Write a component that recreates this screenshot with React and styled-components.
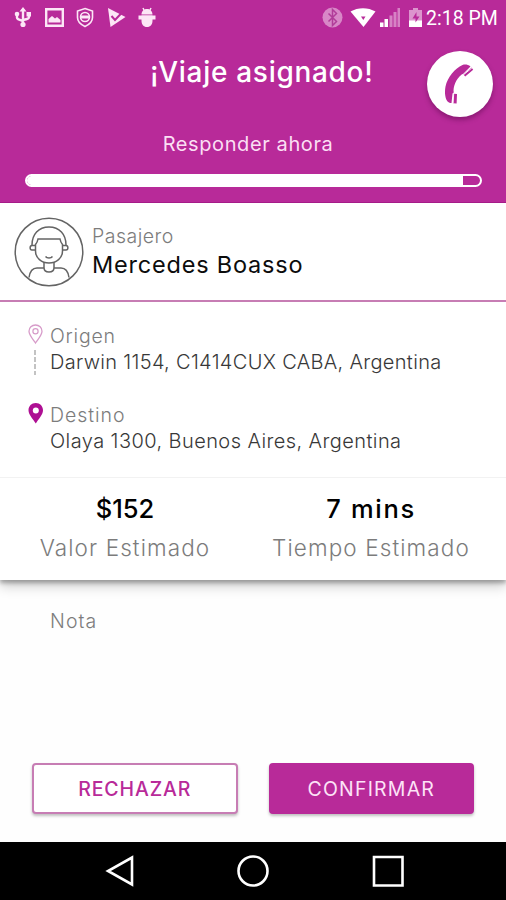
import styled, {createGlobalStyle, ThemeProvider} from "styled-components";

const theme = {
    colors: {
        MAIN: "#b82a99",
        PIN: "#ae0f93",
        LINE: "#c77db4",
        BLACK: "#0c0c0c",
        DARK: "#383838",
        GRAY: "#7c7c7c",
        WHITE: "#fefefe",
    }
}

const StatusIcons = () => (
    <>
        <svg width="148" height="36" viewBox="0 0 148 36" fill="none" stroke="#fce6f6">
            <path d="M15 9v14M9 14v3.500c0 1.500 1 2 6 3.500M21 14v3c0 1.500-1 2-6 3" strokeWidth="2.400"/>
            <path d="M15 7l3.500 4.500h-7zM18.500 12h4.500v4.500h-4.500z" fill="#fce6f6" stroke="none"/>
            <circle cx="9" cy="14" r="2.300" fill="#fce6f6" stroke="none"/>
            <circle cx="15" cy="24.500" r="2.600" fill="#fce6f6" stroke="none"/>
            <path d="M38.200 9.200h16.600v16.600H38.200z" strokeWidth="2.400"/>
            <path d="M40.500 22.500v-3.500l3.500-3 3 2.500 2-1.500 3.500 3v2.500z" fill="#fce6f6" stroke="none"/>
            <path d="M77 8.500l7.500 2.500v6.500c0 4-3 7-7.500 9-4.500-2-7.500-5-7.500-9V11z" strokeWidth="1.600"/>
            <circle cx="77" cy="17" r="4.500" strokeWidth="1.600"/>
            <path d="M72 15.500h10v3H72z" fill="#fce6f6" stroke="none"/>
            <path d="M100 8l17.500 9-15 10z" fill="#fce6f6" stroke="none"/>
            <path d="M103.500 16l3.500 4 8-8.500" stroke="#b82a99" strokeWidth="2"/>
            <path d="M133.500 14.500c0-3 2-5.500 5.500-5.500s5.500 2.500 5.500 5.500zM133.500 15.500h11v5c0 4-2 6.500-5.500 6.500s-5.500-2.500-5.500-6.500z" fill="#fce6f6" stroke="none"/>
            <path d="M135 8l1.500 3M143 8l-1.500 3" strokeWidth="1.500"/>
            <path d="M130.500 15.500v4h17v-4z" fill="#fce6f6" stroke="none"/>
        </svg>
        <svg width="104" height="36" viewBox="0 0 104 36" fill="none">
            <circle cx="12.500" cy="17.500" r="10" fill="#d887c7"/>
            <path d="M8.500 13.500l8 8-4 4V9.500l4 4-8 8" stroke="#b13c99" strokeWidth="1.500"/>
            <path d="M30.500 11.500C38 7 48 7 55.500 11.500L43.500 27z" fill="#fff"/>
            <path d="M41 16.500h4.500l-2.200 3.500z" fill="#b82a99"/>
            <path d="M60 22.500h3.500V27H60zM64.500 19h3.500v8h-3.500z" fill="#fff"/>
            <path d="M69.500 15.500h3V27h-3zM73.500 12h3v15h-3zM77.500 8h2.500v19h-2.500z" fill="#d782c5"/>
            <path d="M89 10h4V8h5v2h4v11H89z" fill="#dc94cd"/>
            <path d="M89 20.500h13V27H89z" fill="#fff"/>
            <path d="M96.500 12l-4 6.500h3v4l4-6h-3z" fill="#b82a99"/>
        </svg>
    </>
)

const PhoneIcon = () => (
    <svg width="30" height="42" viewBox="0 0 30 42">
        <path d="M26.500 3.500C24 1.500 21 1 18.500 2 11 5.500 3.500 14 1.500 23.500c-1.200 6.500-.2 12.500 2.300 15.300 1 .9 2.300 1.200 3.700 1.200l1-9.500 1.200-1C9 24 11.500 16.500 18 11.300l1-.3z" fill="#b82a99"/>
        <path d="M19.500 11.500l8-7 1.700 2.300-8 6.700zM9.600 30.800l3.400.2-.4 9.500-3.600-.2z" fill="#b82a99"/>
        <path d="M19.500 11.800l8.300-6.800M9.700 30.500l-.6 10" stroke="#fff" strokeWidth="0.900"/>
    </svg>
)

const PassengerIcon = () => (
    <svg width="70" height="70" viewBox="0 0 70 70" fill="none" stroke="#646464" strokeWidth="1.500">
        <circle cx="35" cy="35" r="33.800"/>
        <path d="M18 28c0-10.500 6.500-18 17-18s17 7.500 17 18"/>
        <path d="M21.500 34v-6.500c1-1.200 2-2.500 2.500-5.500h22c.5 3 1.500 4.300 2.500 5.500V34c0 7-6 12-13.500 12s-13.500-5-13.500-12z"/>
        <path d="M21 28.500h-3c-2.500 0-2.500 4.500 0 4.500h3.500M49 28.500h3c2.500 0 2.500 4.500 0 4.500h-3.500"/>
        <path d="M31.500 39.500c1.500 2 5.500 2 7 0"/>
        <path d="M30 45.500v5c0 3 2 4.500 5 4.500s5-1.500 5-4.500v-5M30 51h-7c-4.500 0-7 2.500-8 9.500M40 51h7c4.500 0 7 2.500 8 9.500"/>
    </svg>
)

const OriginIcon = () => (
    <svg width="16" height="52" viewBox="0 0 16 52" fill="none">
        <path d="M7.500 1C3.800 1 1 3.800 1 7.200 1 11 4.500 14.500 7.500 19c3-4.500 6.500-8 6.500-11.800C14 3.800 11.200 1 7.500 1z" stroke="#d79bc9" strokeWidth="1.300"/>
        <circle cx="7.500" cy="7.300" r="2.600" stroke="#d79bc9" strokeWidth="1.200"/>
        <path d="M7 26v25" stroke="#aaa" strokeWidth="1.400" strokeDasharray="5 2"/>
    </svg>
)

const DestinationIcon = () => (
    <svg width="16" height="22" viewBox="0 0 16 22">
        <path d="M7.800 0C3.500 0 .5 3.200.5 7.200c0 4.600 4.800 9 7.300 13.300 2.500-4.300 7.200-8.700 7.200-13.300C15 3.200 12 0 7.800 0z" fill={theme.colors.PIN}/>
        <circle cx="7.800" cy="7.500" r="3" fill="#fff"/>
    </svg>
)

const App = () => {
    return (
        <ThemeProvider theme={theme}>
            <GlobalStyle/>
            <Screen>
                <Header>
                    <StatusBar>
                        <StatusIcons/>
                        <Clock>2:18 PM</Clock>
                    </StatusBar>
                    <TitleRow>
                        <Title>¡Viaje asignado!</Title>
                        <CallBtn><PhoneIcon/></CallBtn>
                    </TitleRow>
                    <SubTitle>Responder ahora</SubTitle>
                    <TimeBar>
                        <TimeFill/>
                    </TimeBar>
                </Header>
                <TripCard>
                    <Passenger>
                        <PassengerIcon/>
                        <div>
                            <Label $spacing={0.5}>Pasajero</Label>
                            <PassengerName>Mercedes Boasso</PassengerName>
                        </div>
                    </Passenger>
                    <Places>
                        <Place>
                            <OriginIcon/>
                            <div>
                                <Label $spacing={0.8}>Origen</Label>
                                <Address $spacing={0.32}>Darwin 1154, C1414CUX CABA, Argentina</Address>
                            </div>
                        </Place>
                        <Place>
                            <DestinationIcon/>
                            <div>
                                <Label $spacing={0.95}>Destino</Label>
                                <Address $spacing={0.42}>Olaya 1300, Buenos Aires, Argentina</Address>
                            </div>
                        </Place>
                    </Places>
                    <Estimates>
                        <Estimate>
                            <Value>$152</Value>
                            <Caption>Valor Estimado</Caption>
                        </Estimate>
                        <Estimate>
                            <Value $spacing={1.7}>7 mins</Value>
                            <Caption>Tiempo Estimado</Caption>
                        </Estimate>
                    </Estimates>
                </TripCard>
                <Note>Nota</Note>
                <Actions>
                    <ActionBtn>RECHAZAR</ActionBtn>
                    <ActionBtn $primary>CONFIRMAR</ActionBtn>
                </Actions>
                <NavBar>
                    <svg width="30" height="34" viewBox="0 0 30 34" fill="none" stroke="#fff" strokeWidth="2.600">
                        <path d="M27 3.500v27L3 17z"/>
                    </svg>
                    <svg width="34" height="34" viewBox="0 0 34 34" fill="none" stroke="#fff" strokeWidth="2.600">
                        <circle cx="17" cy="17" r="14.500"/>
                    </svg>
                    <svg width="34" height="34" viewBox="0 0 34 34" fill="none" stroke="#fff" strokeWidth="2.600">
                        <path d="M3 3h28.500v28.500H3z"/>
                    </svg>
                </NavBar>
            </Screen>
        </ThemeProvider>
    );
};

const GlobalStyle = createGlobalStyle`
  * {
    box-sizing: border-box;
  }
  body {
    margin: 0;
    font-family: Inter, "Open Sans", sans-serif;
  }
  svg {
    display: block;
    flex-shrink: 0;
  }
`;
const Screen = styled.div`
  width: 506px;
  height: 900px;
  display: flex;
  flex-direction: column;
  overflow: hidden;
  background: ${({theme}) => theme.colors.WHITE};
`;
const Header = styled.header`
  height: 203px;
  background: ${({theme}) => theme.colors.MAIN};
  border-bottom: 1px solid #a51b88;
  color: #fff;
`;
const StatusBar = styled.div`
  height: 36px;
  display: flex;
  padding: 0 8px;
  svg:nth-of-type(2) {
    margin-left: 164px;
  }
`;
const Clock = styled.span`
  flex: 1;
  margin-left: 2px;
  white-space: nowrap;
  font-family: Roboto, sans-serif;
  font-size: 19.5px;
  line-height: 37px;
`;
const TitleRow = styled.div`
  height: 84px;
  display: flex;
  align-items: flex-start;
  justify-content: space-between;
  padding: 0 13px 0 150px;
`;
const Title = styled.h1`
  margin: 0;
  font-size: 28px;
  font-weight: 500;
  line-height: 73px;
  letter-spacing: 0.7px;
  white-space: nowrap;
`;
const CallBtn = styled.button`
  width: 66px;
  height: 66px;
  margin-top: 15px;
  padding: 0 2px 0 0;
  display: flex;
  align-items: center;
  justify-content: center;
  border: none;
  border-radius: 50%;
  background: #fff;
  box-shadow: 0 3px 5px rgba(70, 0, 60, 0.4);
`;
const SubTitle = styled.p`
  margin: 0 0 6px;
  padding-right: 10px;
  text-align: center;
  color: #fbdff4;
  font-size: 20px;
  line-height: 48px;
  letter-spacing: 0.6px;
`;
const TimeBar = styled.div`
  height: 13px;
  margin: 0 24px 0 25px;
  border: 2px solid #fff;
  border-radius: 7px;
  overflow: hidden;
`;
const TimeFill = styled.div`
  width: 436px;
  height: 100%;
  background: #fff;
`;
const TripCard = styled.section`
  height: 377px;
  background: #fff;
  box-shadow: 0 3px 4px rgba(0, 0, 0, 0.28), 0 6px 12px rgba(0, 0, 0, 0.2);
  clip-path: inset(0 0 -30px 0);
`;
const Passenger = styled.div`
  height: 99px;
  display: flex;
  gap: 8px;
  padding: 14px 14px 0;
  border-bottom: 2px solid ${({theme}) => theme.colors.LINE};
  > div {
    padding-top: 6px;
  }
`;
const Label = styled.div`
  color: ${({theme}) => theme.colors.GRAY};
  font-size: 19.5px;
  font-weight: 300;
  line-height: 27px;
  letter-spacing: ${({$spacing}) => $spacing}px;
`;
const PassengerName = styled.div`
  color: ${({theme}) => theme.colors.BLACK};
  font-size: 23.5px;
  font-weight: 400;
  line-height: 30px;
  letter-spacing: 0.8px;
`;
const Places = styled.div`
  height: 175px;
  padding: 22px 28px 0;
`;
const Place = styled.div`
  height: 79px;
  display: flex;
  gap: 6px;
  > div {
    margin-top: -1px;
    white-space: nowrap;
  }
`;
const Address = styled.div`
  color: ${({theme}) => theme.colors.DARK};
  font-size: 20px;
  font-weight: 300;
  line-height: 24px;
  letter-spacing: ${({$spacing}) => $spacing}px;
`;
const Estimates = styled.div`
  height: 103px;
  display: grid;
  grid-template-columns: 250px 242px;
  padding-top: 12px;
  border-top: 1px solid #f2f2f2;
`;
const Estimate = styled.div`
  text-align: center;
`;
const Value = styled.div`
  color: #000;
  font-size: 25.5px;
  font-weight: 500;
  line-height: 38px;
  letter-spacing: ${({$spacing}) => $spacing || 0}px;
`;
const Caption = styled.div`
  color: ${({theme}) => theme.colors.GRAY};
  font-size: 22.5px;
  font-weight: 300;
  line-height: 40px;
  letter-spacing: 1.1px;
`;
const Note = styled.div`
  flex: 1;
  padding: 27px 50px 0;
  color: ${({theme}) => theme.colors.GRAY};
  font-size: 19.5px;
  font-weight: 300;
  line-height: 28px;
  letter-spacing: 1.1px;
`;
const Actions = styled.div`
  display: flex;
  gap: 31px;
  padding: 0 32px 28px;
`;
const ActionBtn = styled.button`
  width: 206px;
  height: 51px;
  padding: 0;
  border: 2px solid ${({theme, $primary}) => $primary ? theme.colors.MAIN : theme.colors.LINE};
  border-radius: 4px;
  background: ${({theme, $primary}) => $primary ? theme.colors.MAIN : "#fff"};
  box-shadow: 0 2px 3px rgba(0, 0, 0, 0.25);
  color: ${({theme, $primary}) => $primary ? "#fde3f7" : theme.colors.MAIN};
  font-family: inherit;
  font-size: 19.5px;
  font-weight: ${({$primary}) => $primary ? 400 : 500};
  letter-spacing: ${({$primary}) => $primary ? 1.2 : 0.9}px;
`;
const NavBar = styled.nav`
  height: 58px;
  display: flex;
  align-items: center;
  justify-content: space-between;
  padding: 0 101px 0 105px;
  background: #000;
`;
export default App;
